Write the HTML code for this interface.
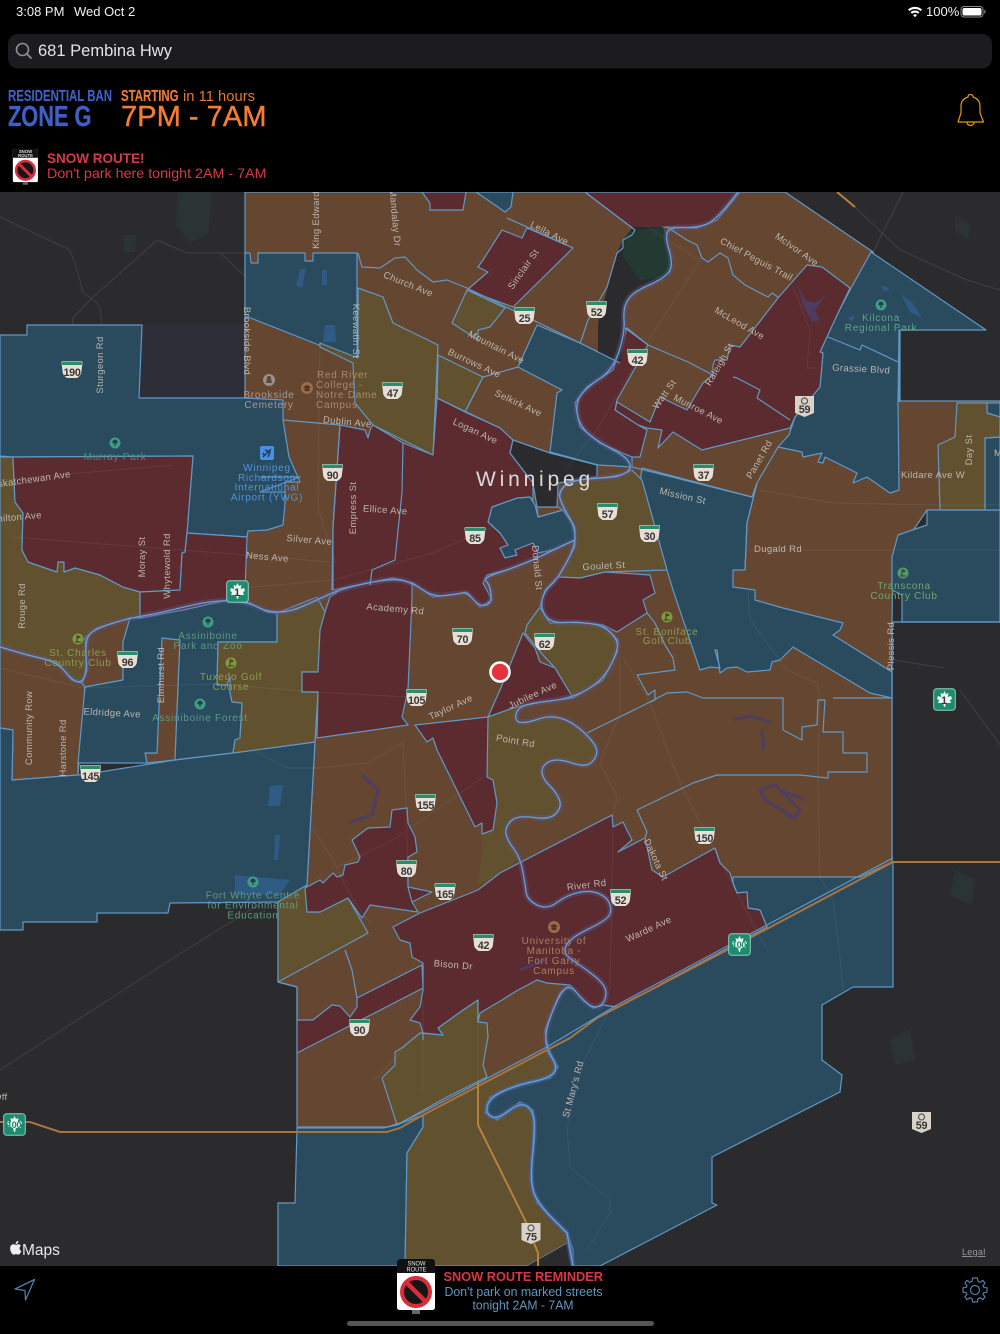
<!DOCTYPE html>
<html><head><meta charset="utf-8"><title>Snow Route Map</title>
<style>
html,body{margin:0;padding:0;background:#000;width:1000px;height:1334px;overflow:hidden}
svg{display:block;font-family:"Liberation Sans",sans-serif}
.br{fill:#654630}.ma{fill:#5b2b2f}.bl{fill:#2a4a5e}.ol{fill:#62512e}.dk{fill:#2b2b2d}
.z polygon{stroke:#6198c6;stroke-width:1.2;stroke-linejoin:round}
.ln{fill:none;stroke:#6198c6;stroke-width:1.2;stroke-linejoin:round}
.rd{fill:none;stroke:#fff;stroke-opacity:.1;stroke-width:1}
.rz{fill:none;stroke:#fff;stroke-opacity:.065;stroke-width:1}
.l text{font-size:9.5px;letter-spacing:.35px;fill:#bdb7b1;text-anchor:middle}
.p text{font-size:10px;letter-spacing:.75px;text-anchor:middle}
.sn text{font-size:10.8px;font-weight:bold;text-anchor:middle;fill:#3a3633;letter-spacing:-.3px}
</style></head><body>
<svg width="1000" height="1334" viewBox="0 0 1000 1334" xmlns="http://www.w3.org/2000/svg">
<defs>
<g id="s"><path d="M1.500 0H19.500Q21 0 21 1.500L20 10Q20 13 18 15L15.500 17H5.500L3 15Q1 13 1 10L0 1.500Q0 0 1.500 0Z" fill="#e6dfd7"/><path d="M1.500 .5H19.500Q20.500 .5 20.500 1.500L20.300 4H.7L.5 1.500Q.5 .5 1.500 .5Z" fill="#2b8c6b"/></g>
<g id="h"><path d="M1 0H20V17L10.500 21L1 17Z" fill="#d8d2ca"/><circle cx="10.500" cy="5" r="3" fill="none" stroke="#555" stroke-width="1.200"/></g>
<g id="t"><rect x=".7" y=".7" width="21.600" height="21.600" rx="3" fill="#1e8a6e" stroke="#8ed0bc" stroke-width="1"/><path d="M11.500 3L13 6L15.500 5L14.700 9L18 8L19 10.500L17 12.500L18 15L13 15L12 19H11L10 15L5 15L6 12.500L4 10.500L5 8L8.300 9L7.500 5L10 6Z" fill="#eaf4f0"/></g>
<g id="tree"><circle r="5.500" fill="currentColor"/><path d="M0-3.400a2.600 2.600 0 0 1 2.300 3.800H.6V3H-.6V.4H-2.300A2.600 2.600 0 0 1 0-3.400Z" fill="#24404a"/></g>
<g id="golf"><circle r="5.500" fill="currentColor"/><path d="M-1-3.600V2.500M-1-3.600L2-2L-1-.8M-3 3H3" stroke="#3a3a20" stroke-width="1" fill="none"/></g>
<g id="uni"><circle r="6" fill="#9a6c48"/><path d="M-4-1L0-3L4-1L0 1ZM-2.500 .5V2.500Q0 4 2.500 2.500V.5" fill="#4c3526"/></g>
<g id="sign"><rect x="-1" width="38" height="51" rx="2.500" fill="#fff"/><path d="M1.500 0H34.500A2.500 2.500 0 0 1 37 2.500V14H-1V2.500A2.500 2.500 0 0 1 1.500 0Z" fill="#111"/><circle cx="18" cy="33" r="14" fill="#151515" stroke="#d92b3a" stroke-width="4"/><path d="M8.500 23.500L27.500 42.500" stroke="#d92b3a" stroke-width="4.500"/><rect x="14" y="51" width="8" height="4" fill="#666"/></g>
<path id="rv" fill="none" d="M0 647Q27 655 42 658.5T64.5 671T77 681.5T84.5 676.5T86 654T91 633T113.5 623T145 615.5T180 608T213.5 601.5T238.5 601.5T258.5 607.5T278.5 612T303.5 606T330 594T368 583T403 580.5T423 590T445 595.5T462 593T473.5 599.5T486 605T491 594T486.5 581.5T495 574T520 565T543 555T564 545L575 540M738 192Q717 220 707 224T683.5 227.5T667.5 232T669 250T670 270T650 284.5T628 299.5T624 320T619 351.5T600 378.5T581 395T577.5 415T590 435T613.5 450T629.5 463.5T624.5 473.5T593.5 478.5T564 486.5T560.5 500T569 517T575 537T566 563.5T551 585T542.5 598.5T545 615T563.5 622.5T590 623.5T610.5 632.5T617.5 646.5T610 666.5T588 689T553 700.5T525 705.5T516 715T521 722.5T538.5 719T561.5 718.5T584 732.5T596.5 749T592.5 761.5T572 763T549.5 761.5T542 771.5T549.5 785.5T559.5 800T556 813.5T533.5 817.5T511 821T506 833.5T513.5 848.5T522.5 870T526 891.5T537 905T557 902.5T578.5 892.5T598.5 893.5T609.5 903.5T609.5 915T588.5 929T566.5 945T567.5 956T579.5 965T595 976.5T605 988T605 999T598 1006.5T588 1004T576.5 992.5T565 989T552.5 1011.5T546 1040T552.5 1058.5T554 1072.5T533.5 1081.5T503.5 1091T487.5 1105T491 1116.5T508.5 1111T526.5 1106T534 1120T532.5 1155T533.5 1191.5T552 1218L567 1233L573 1266"/>
</defs>

<rect width="1000" height="1334" fill="#000"/>
<!-- map -->
<rect y="192" width="1000" height="1074" fill="#2b2b2d"/>
<g fill="#2a3432"><path d="M178 192H212L208 235L190 242L176 225Z"/><path d="M124 235H136L135 252H124Z"/><path d="M955 215L970 225L968 240L955 230Z"/><path d="M955 870L975 880L972 905L950 895Z"/><path d="M890 1040L910 1030L915 1060L895 1065Z"/></g>
<g class="rd">
<path d="M0 217L70 250Q78 270 83 293Q95 300 100 307L103 337L98 395M187 253L157 240L90 300L73 318L70 400L40 433L0 442M187 253H245M58 418L95 458M220 253L320 345M0 1070L170 960L258 905M960 690L1000 745M855 207L900 250L967 280L1000 290M903 192L873 252M894 660L944 668"/>
</g>
<g class="z">
<polygon class="br" points="245,192 785,192 873,252 900,330 899,401 1000,401 1000,510 927,510 893,560 892,622 892,862 860,877 767,927 617,1007 547,1050 423,1115 397,1125 383,1128 297,1128 297,987 278,982 278,902 307,885 315,742 322,630 290,612 267,612 250,603 245,603"/>
<polygon class="br" points="0,647 27,655 57,662 72,680 82,683 85,687 78,775 12,780 13,730 0,728"/>
<polygon class="br" points="130,618 123,642 123,680 85,687 82,683 87,670 85,638 97,628"/>
<polygon class="br" points="162,638 180,640 175,760 147,763 145,753 157,753 155,738"/>
<!-- blues -->
<polygon fill="#2e2e38" style="stroke:none" points="142,325 245,325 245,398 139,398"/>
<polygon class="bl" points="0,335 27,335 27,325 142,325 139,398 245,398 283,400 283,420 289,457 300,482 285,482 285,503 283,525 267,530 248,531 247,537 187,533 193,456 13,457 0,456"/>
<polygon class="bl" points="245,253 250,253 251,263 258,263 258,253 305,253 305,261 313,261 313,253 357,253 357,358 319,345 248,317 245,317"/>
<polygon class="bl" points="537,325 580,343 620,363 613,370 587,387 575,403 580,427 600,443 632,457 632,467 598,465 550,452 557,393 562,390 518,367"/>
<polygon class="bl" points="492,507 488,522 500,533 508,545 500,548 505,558 517,555 515,550 533,543 538,553 553,550 575,540 577,530 563,510 538,517 535,505 530,497 517,498"/>
<polygon class="br" points="537,507 558,507 563,510 538,517"/>
<polygon class="bl" points="871,252 986,330 899,330 898,402 899,490 890,493 867,477 853,483 857,473 825,457 823,463 818,462 822,453 803,457 802,452 778,447 789,435 795,417 820,387 823,353 820,352 838,313 850,290"/>
<polygon class="bl" points="642,468 752,497 757,483 747,523 745,570 733,570 733,587 755,590 755,600 783,608 843,623 840,630 833,635 892,672 892,698 870,693 793,647 780,660 772,662 770,670 747,672 737,667 727,668 720,673 717,650 715,650 720,668 710,667 700,670 673,590 667,570 640,483"/>
<polygon class="bl" points="927,510 1000,510 1000,622 902,622 902,595 892,590 892,557 898,535 927,525"/>
<polygon class="bl" points="987,403 1000,403 1000,417 987,413"/>
<polygon class="bl" points="985,438 1000,437 1000,510 985,510"/>
<polygon class="bl" points="476,192 513,192 511,207 505,212 495,205"/>
<polygon class="bl" points="130,618 183,610 227,600 250,603 267,612 277,613 277,642 218,642 217,685 230,685 230,693 232,702 242,703 240,738 235,740 233,753 175,760 180,640 162,638 157,753 145,753 147,763 78,763 85,687 123,680 123,642"/>
<polygon class="bl" points="0,728 13,730 12,780 78,775 100,772 175,760 233,753 315,742 307,885 278,902 170,903 168,913 97,913 97,922 23,922 23,930 0,930"/>
<polygon class="bl" points="893,862 893,987 853,987 822,1005 822,1060 842,1075 840,1092 712,1157 712,1203 717,1205 600,1266 573,1266 573,1250 567,1233 537,1203 530,1180 535,1130 533,1110 520,1102 497,1120 485,1113 490,1097 517,1085 550,1078 558,1067 547,1050 545,1030 560,993 570,985 583,1000 593,1008 603,1005 617,1007 767,927 760,910 748,908 747,892 737,893 733,883 733,877 860,877"/>
<polygon class="bl" points="297,1128 383,1128 397,1125 423,1115 423,1127 407,1153 405,1266 278,1266 278,1203 295,1203"/>
<!-- olives -->
<polygon class="ol" points="0,457 13,457 15,502 23,513 22,550 28,562 57,572 58,562 64,562 64,572 75,568 100,575 123,587 140,592 140,618 130,618 97,628 85,638 87,670 82,683 72,680 57,662 27,655 0,647"/>
<polygon class="ol" points="358,288 383,297 393,323 438,345 433,455 373,425 355,403 353,363 320,347 320,343 358,358"/>
<polygon class="ol" points="438,355 483,377 465,412 437,398"/>
<polygon class="ol" points="467,290 505,308 490,327 478,330 478,340 452,323"/>
<polygon class="ol" points="558,493 570,480 617,477 632,470 642,480 667,570 605,572 580,578 558,577 575,547 575,527 563,507"/>
<polygon class="ol" points="957,403 987,403 987,413 1000,417 1000,437 985,438 985,510 940,510 938,445 955,437"/>
<polygon class="ol" points="277,613 317,597 325,612 322,630 320,658 318,672 302,672 302,692 318,692 315,742 233,753 235,740 240,738 242,703 232,702 230,693 230,677 227,685 217,685 218,642 277,642"/>
<polygon class="ol" points="278,902 307,885 307,912 320,912 348,898 368,933 278,982"/>
<polygon class="ol" points="540,607 527,625 525,633 543,655 555,668 573,698 603,680 617,653 618,640 603,625 577,622 550,623"/>
<polygon class="ol" points="488,717 513,708 517,708 515,722 527,723 550,715 573,722 595,743 598,755 587,768 557,758 542,765 542,778 557,793 562,807 550,820 517,815 505,827 507,840 520,857 500,873 478,885 482,850 482,834 493,830 497,803 493,780 487,777" style="stroke:none"/>
<polygon class="ol" points="395,1065 395,1052 403,1047 420,1033 443,1035 438,1028 463,1010 478,1000 478,1022 487,1023 488,1037 483,1065 487,1077 447,1097 397,1125 382,1078"/>
<polygon class="ol" points="546,1050 558,1067 550,1078 517,1085 490,1097 485,1113 497,1120 520,1102 533,1110 535,1130 530,1180 537,1203 567,1233 568,1243 527,1266 405,1266 407,1153 423,1127 423,1115"/>
<polygon class="dk" points="568,1243 573,1266 527,1266" style="stroke:none"/>
<!-- maroons -->
<polygon class="ma" points="13,457 193,456 187,533 185,552 182,553 180,590 140,592 123,587 100,575 75,568 64,572 64,562 58,562 57,572 28,562 22,550 23,513 15,502"/>
<polygon class="ma" points="187,533 247,537 245,590 245,603 227,600 183,610 140,618 140,592 180,590 182,553 185,552"/>
<polygon class="ma" points="340,425 365,430 368,438 370,430 373,425 403,443 433,455 437,398 465,412 500,428 513,440 510,453 533,483 533,500 530,497 517,498 492,507 488,522 500,533 508,545 500,548 505,558 517,555 515,550 533,543 538,553 553,550 533,560 507,570 487,575 483,583 492,600 480,607 467,592 457,594 433,597 413,583 393,578 343,588 333,590 333,527"/>
<polygon class="ma" points="330,597 343,588 393,578 412,583 412,597 408,690 402,717 408,725 317,738 318,692 302,692 302,672 318,672 320,630 325,612"/>
<polygon class="ma" points="502,230 522,238 527,228 573,248 513,307 467,290 488,272 478,267 483,260"/>
<polygon class="ma" points="422,192 466,192 463,210 430,210 430,203"/>
<polygon class="ma" points="585,192 740,192 717,220 697,228 667,227 635,230"/>
<polygon class="ma" points="807,265 822,267 850,288 838,313 820,352 823,353 820,387 795,417 790,428 702,450 673,432 658,448 662,430 647,428 638,425 615,410 617,402 650,422 660,397 687,410 697,393 703,383 713,375 713,365 715,360 727,360 730,345 740,347 778,298"/>
<polygon class="ma" points="627,328 648,345 617,400 615,410 638,425 647,430 640,457 632,457 600,443 580,427 575,403 587,387 613,370"/>
<polygon class="ma" points="558,577 580,578 605,572 650,575 655,593 643,600 647,613 617,632 603,625 577,622 550,623 540,607 545,590"/>
<polygon class="ma" points="523,633 535,648 540,662 555,668 573,698 533,703 513,708 488,717 500,690"/>
<polygon class="ma" points="415,725 488,717 487,777 493,780 497,803 493,830 482,834 482,823 475,827 437,750 433,738 427,742"/>
<polygon class="ma" points="352,840 368,828 390,827 392,810 407,808 408,823 415,837 417,852 408,857 408,887 432,892 412,902 418,912 370,905 362,918 348,898 320,912 307,912 305,888 320,880 323,883 333,873 337,877 343,875 345,865 358,862 360,857"/>
<polygon class="ma" points="393,927 420,913 478,890 500,873 612,815 613,827 623,822 632,840 618,852 645,838 652,870 663,877 715,848 720,863 730,873 733,883 737,893 747,892 748,908 760,910 767,927 617,1007 603,1005 593,1008 583,1000 570,985 547,983 537,980 518,990 502,1000 480,1013 478,1022 478,1000 463,1010 438,1028 443,1035 423,1033 420,1023 410,1020 420,1007 423,990 423,963 412,957 410,943 400,940"/>
<polygon class="ma" points="297,1020 313,1020 332,1005 340,1006 350,1017 357,1007 357,998 422,965 423,988 297,1053"/>
<!-- dark -->
<polygon class="dk" points="633,227 663,227 673,263 667,277 633,292 623,307 625,333 620,363 598,353 598,323 617,253 623,240" style="stroke:none"/>
<polygon fill="#233a32" points="628,232 663,227 673,263 667,277 640,280 622,255" style="stroke:none"/>
<polygon class="dk" points="513,440 550,453 597,465 597,477 558,483 557,507 537,507 533,483 510,453"/>
</g>
<!-- faint roads over zones -->
<g class="rz">
<path d="M748 590L750 620L787 670L817 683L820 697L818 773L820 877L833 900L840 957L843 990"/>
<path d="M623 657L650 703L680 783L700 823L718 857L767 950M613 817L617 797L600 763L620 713L620 657M610 990L613 830"/>
<path d="M252 750L287 768H317L367 763L403 743L407 830V887M310 823L333 860L353 900L370 923M337 867L393 840L483 777"/>
<path d="M0 668L83 688L217 684L317 692L408 697M320 343L318 507L335 563M243 588L333 580L433 553L493 527M13 537L90 543L247 555L330 562M0 480L173 465"/>
<path d="M647 227L700 260L647 343L597 430L567 467M760 490L833 503L940 505H1000M747 550H1000M793 287L810 330L807 368H820"/>
<path d="M608 1013L583 1063L567 1127L570 1167L610 1200V1213L587 1250M478 1000V1085M423 1000V1090M375 1080L405 1047"/>
</g>
<!-- water blobs -->
<g fill="#4d3d68" opacity=".9">
<path d="M797 283L805 300L815 303L826 295L815 310L820 320L812 322L803 305Z"/>
<path d="M733 720L750 716L770 722M762 730L764 750" fill="none" stroke="#4d3d68" stroke-width="3"/>
<path d="M760 790L775 785L800 810L795 818L765 800ZM780 790L805 800M795 818L785 815" fill="none" stroke="#4d3d68" stroke-width="3"/>
<path d="M362 775L378 790L372 815L350 822" fill="none" stroke="#4d3d68" stroke-width="3"/>
<path d="M635 995L660 985M520 970L545 960" fill="none" stroke="#4d3d68" stroke-width="3"/>
</g>
<g fill="#2f5a84">
<path d="M270 786L283 785L280 806L268 806Z"/><path d="M275 835L280 835L278 860L274 860Z"/><path d="M235 875L290 880L280 895L235 895Z"/>
<path d="M325 325L335 325L336 342L323 342Z"/><path d="M300 270L306 268L302 288L296 285Z"/><path d="M322 270H327V285H322Z"/>
<path d="M901 294L912 302L922 318L910 312ZM880 285L890 288L885 292ZM848 318L855 315L852 322Z"/>
</g>
<!-- rivers -->
<g fill="none" stroke-linejoin="round" stroke-linecap="round">
<use href="#rv" stroke="#5c5590" stroke-opacity=".42" stroke-width="6"/>
<path d="M546 1040Q547 1050 552.5 1058.5T554 1072.5T533.5 1081.5T503.5 1091T487.5 1105T491 1116.5T508.5 1111T526.5 1106T534 1120T532.5 1155T533.5 1191.5T552 1218L567 1233L573 1266" stroke="#3c6a9f" stroke-width="3.200"/>
<use href="#rv" stroke="#6aa0cf" stroke-width="1.300"/>
</g>
<!-- extra zone lines -->
<g class="ln">
<path d="M358 253L362 267L380 268L395 258L405 257L417 270L433 282L447 280L467 288L580 343L620 363"/>
<path d="M585 192L635 230L632 235L623 240L623 248L617 253L607 287L588 320L582 338L580 343"/>
<path d="M667 227L687 240L697 245L702 258L708 262L720 253L728 258L733 275L745 285L768 297L772 293L778 297"/>
<path d="M625 328L648 345L688 362L713 375M733 377L737 378L760 390L757 398L790 420"/>
<path d="M500 428L437 398M483 377L465 412M438 355L437 398M518 367L483 377M507 218L573 248"/>
<path d="M828 337L860 350L862 345L898 362M778 447L757 483L747 523L745 570M632 467L752 497"/>
<path d="M245 317V398M283 420L340 425M260 477H300L260 492H285M333 527L340 425M333 527L332 590M403 443L402 492L395 560L372 570L370 585"/>
<path d="M637 675L648 695L655 690L655 700L648 703L587 733M648 703L667 693L687 692L703 698H783V730L802 740V727L817 725L818 700H825L823 732H843V753H867V772H828V778L800 775L717 775L693 783L637 810L647 832L645 838"/>
<path d="M647 613L655 623L665 645L673 658L675 670L637 675M833 698H892M900 330V402M892 622H1000M892 622V862"/>
<path d="M345 950L352 970L357 998M297 1020V987L278 982"/>
<path d="M423 1033V1040M412 902L408 887"/>
<path d="M78 763V775"/>
</g>
<!-- perimeter orange -->
<g fill="none" stroke="#a9753e" stroke-width="2">
<path d="M0 1122H30L60 1132H387L400 1128L423 1115L547 1050L570 1038L597 1018L727 950L893 862H1000"/>
<path d="M478 1083V1125L525 1220L538 1253V1266M837 192L855 207" stroke="#b5823c"/>
</g>
<g class="ln"><path d="M297 1127H387L400 1123L423 1112L547 1047L617 1005L733 943L893 858"/></g>

<!-- road labels -->
<g class="l">
<text transform="translate(319 220) rotate(-90)">King Edward</text>
<text transform="translate(392 218) rotate(85)">Mandalay Dr</text>
<text transform="translate(407 287) rotate(22)">Church Ave</text>
<text transform="translate(526 271) rotate(-55)">Sinclair St</text>
<text transform="translate(548 236) rotate(27)">Leila Ave</text>
<text transform="translate(795 252) rotate(35)">McIvor Ave</text>
<text transform="translate(755 262) rotate(28)">Chief Peguis Trail</text>
<text transform="translate(738 326) rotate(30)">McLeod Ave</text>
<text transform="translate(495 350) rotate(27)">Mountain Ave</text>
<text transform="translate(473 366) rotate(25)">Burrows Ave</text>
<text transform="translate(517 406) rotate(25)">Selkirk Ave</text>
<text transform="translate(474 434) rotate(25)">Logan Ave</text>
<text transform="translate(722 366) rotate(-60)">Raleigh St</text>
<text transform="translate(667 396) rotate(-55)">Watt St</text>
<text transform="translate(697 412) rotate(27)">Munroe Ave</text>
<text transform="translate(762 461) rotate(-60)">Panet Rd</text>
<text transform="translate(682 499) rotate(13)">Mission St</text>
<text transform="translate(347 425) rotate(6)">Dublin Ave</text>
<text transform="translate(385 513) rotate(4)">Ellice Ave</text>
<text transform="translate(356 508) rotate(-90)">Empress St</text>
<text transform="translate(353 331) rotate(90)">Keewatin St</text>
<text transform="translate(244 341) rotate(90)">Brookside Blvd</text>
<text transform="translate(103 365) rotate(-90)">Sturgeon Rd</text>
<text transform="translate(71 477) rotate(-8)" style="text-anchor:end">Saskatchewan Ave</text>
<text transform="translate(42 518) rotate(-5)" style="text-anchor:end">Hamilton Ave</text>
<text transform="translate(145 557) rotate(-90)">Moray St</text>
<text transform="translate(170 566) rotate(-90)">Whytewold Rd</text>
<text transform="translate(309 543) rotate(5)">Silver Ave</text>
<text transform="translate(267 560) rotate(5)">Ness Ave</text>
<text transform="translate(395 612) rotate(5)">Academy Rd</text>
<text transform="translate(604 569) rotate(-3)">Goulet St</text>
<text transform="translate(534 568) rotate(85)">Donald St</text>
<text transform="translate(778 552)">Dugald Rd</text>
<text transform="translate(861 372) rotate(3)">Grassie Blvd</text>
<text transform="translate(933 478)">Kildare Ave W</text>
<text transform="translate(972 450) rotate(-90)">Day St</text>
<text transform="translate(994 456)" style="text-anchor:start">M</text>
<text transform="translate(25 606) rotate(-90)">Rouge Rd</text>
<text transform="translate(32 728) rotate(-90)">Community Row</text>
<text transform="translate(66 748) rotate(-90)">Harstone Rd</text>
<text transform="translate(112 716) rotate(3)">Eldridge Ave</text>
<text transform="translate(164 675) rotate(-90)">Elmhurst Rd</text>
<text transform="translate(452 710) rotate(-25)">Taylor Ave</text>
<text transform="translate(534 698) rotate(-25)">Jubilee Ave</text>
<text transform="translate(515 744) rotate(10)">Point Rd</text>
<text transform="translate(894 646) rotate(-90)">Plessis Rd</text>
<text transform="translate(653 861) rotate(65)">Dakota St</text>
<text transform="translate(587 888) rotate(-7)">River Rd</text>
<text transform="translate(650 932) rotate(-25)">Warde Ave</text>
<text transform="translate(453 968) rotate(5)">Bison Dr</text>
<text transform="translate(576 1090) rotate(-75)">St Mary's Rd</text>
<text transform="translate(-6 1100)" style="text-anchor:start">Off</text>
</g>

<!-- POI -->
<g class="p">
<use href="#tree" x="115" y="443" color="#3f9d83"/>
<text x="115" y="460" fill="#4b8c7c">Murray Park</text>
<rect x="260" y="446" width="14" height="14" rx="2" fill="#4a90e2"/><path d="M263 457L271 449M265 450L270 452L268 457M264 455L263 453" stroke="#1d3b5c" stroke-width="1.500" fill="none"/>
<g fill="#4f95dc"><text x="267" y="471">Winnipeg</text><text x="267" y="481">Richardson</text><text x="267" y="490.500">International</text><text x="267" y="500.500">Airport (YWG)</text></g>
<circle cx="269" cy="380" r="6" fill="#9a9088"/><path d="M266 383H272L271 378A2 2 0 0 0 267 378Z" fill="#5a4a3e"/>
<g fill="#a59b93"><text x="269" y="398">Brookside</text><text x="269" y="408">Cemetery</text></g>
<use href="#uni" x="307" y="388"/>
<g fill="#a88a6c"><text x="317" y="378" style="text-anchor:start">Red River</text><text x="316" y="388" style="text-anchor:start">College -</text><text x="316" y="398" style="text-anchor:start">Notre Dame</text><text x="316" y="408" style="text-anchor:start">Campus</text></g>
<use href="#tree" x="881" y="305" color="#3f9d83"/>
<g fill="#5aa58b"><text x="881" y="321">Kilcona</text><text x="881" y="331">Regional Park</text></g>
<use href="#golf" x="903" y="573" color="#4e9c6e"/>
<g fill="#6da86d"><text x="904" y="589">Transcona</text><text x="904" y="599">Country Club</text></g>
<use href="#golf" x="667" y="617" color="#7f9a3e"/>
<g fill="#8c9c50"><text x="667" y="635">St. Boniface</text><text x="667" y="644">Golf Club</text></g>
<use href="#golf" x="78" y="639" color="#7f9a3e"/>
<g fill="#8c9c50"><text x="78" y="656">St. Charles</text><text x="78" y="666">Country Club</text></g>
<use href="#tree" x="208" y="622" color="#3f9d83"/>
<g fill="#5b9a80"><text x="208" y="639">Assiniboine</text><text x="208" y="649">Park and Zoo</text></g>
<use href="#golf" x="231" y="663" color="#7f9a3e"/>
<g fill="#8c9c50"><text x="231" y="680">Tuxedo Golf</text><text x="231" y="690">Course</text></g>
<use href="#tree" x="200" y="704" color="#3f9d83"/>
<text x="200" y="721" fill="#5b9a80">Assiniboine Forest</text>
<use href="#tree" x="253" y="882" color="#3f9d83"/>
<g fill="#5b9a80"><text x="253" y="898.500">Fort Whyte Centre</text><text x="253" y="908.500">for Environmental</text><text x="253" y="918.500">Education</text></g>
<use href="#uni" x="554" y="927"/>
<g fill="#a8805f"><text x="554" y="944">University of</text><text x="554" y="954">Manitoba -</text><text x="554" y="964">Fort Garry</text><text x="554" y="974">Campus</text></g>
</g>
<text x="535" y="486" font-size="21" fill="#dcdad8" text-anchor="middle" letter-spacing="3.800">Winnipeg</text>

<!-- shields -->
<g class="sn">
<use href="#s" x="61.500" y="361"/><text x="72" y="376">190</text>
<use href="#s" x="382" y="382"/><text x="392.500" y="397">47</text>
<use href="#s" x="322" y="464"/><text x="332.500" y="479">90</text>
<use href="#s" x="464.500" y="527"/><text x="475" y="542">85</text>
<use href="#s" x="514" y="307"/><text x="524.500" y="322">25</text>
<use href="#s" x="586" y="301"/><text x="596.500" y="316">52</text>
<use href="#s" x="627" y="349"/><text x="637.500" y="364">42</text>
<use href="#s" x="693" y="464"/><text x="703.500" y="479">37</text>
<use href="#s" x="597" y="503"/><text x="607.500" y="518">57</text>
<use href="#s" x="639" y="525"/><text x="649.500" y="540">30</text>
<use href="#s" x="452" y="628"/><text x="462.500" y="643">70</text>
<use href="#s" x="534" y="633"/><text x="544.500" y="648">62</text>
<use href="#s" x="406" y="689"/><text x="416.500" y="704">105</text>
<use href="#s" x="117" y="651"/><text x="127.500" y="666">96</text>
<use href="#s" x="80" y="765"/><text x="90.500" y="780">145</text>
<use href="#s" x="415" y="794"/><text x="425.500" y="809">155</text>
<use href="#s" x="396" y="860"/><text x="406.500" y="875">80</text>
<use href="#s" x="434.500" y="883"/><text x="445" y="898">165</text>
<use href="#s" x="473" y="934"/><text x="483.500" y="949">42</text>
<use href="#s" x="349" y="1019"/><text x="359.500" y="1034">90</text>
<use href="#s" x="694" y="827"/><text x="704.500" y="842">150</text>
<use href="#s" x="610" y="889"/><text x="620.500" y="904">52</text>
<use href="#h" x="794" y="396"/><text x="804.500" y="413">59</text>
<use href="#h" x="911" y="1112"/><text x="921.500" y="1129">59</text>
<use href="#h" x="520.500" y="1223"/><text x="531" y="1240.500">75</text>
<use href="#t" x="226" y="580"/><text x="237" y="596" fill="#1e8a6e">1</text>
<use href="#t" x="933" y="688"/><text x="944" y="704" fill="#1e8a6e">1</text>
<use href="#t" x="728" y="933"/><text x="739" y="948" style="font-size:9px;fill:#1e8a6e">100</text>
<use href="#t" x="3" y="1113"/><text x="14" y="1128" style="font-size:9px;fill:#1e8a6e">100</text>
</g>

<!-- pin -->
<circle cx="500" cy="672" r="9.500" fill="#e4333f" stroke="#fff" stroke-width="2.600"/>

<!-- Maps logo -->
<path d="M17 1244.500c.6-.7 1-1.500.9-2.300-.8 0-1.700.5-2.200 1.100-.5.600-.9 1.400-.8 2.200.8.100 1.600-.4 2.100-1ZM17.900 1245.700c-1.200-.1-2.200.7-2.800.7s-1.500-.7-2.400-.6c-1.200 0-2.400.7-3 1.800-1.300 2.200-.3 5.500.9 7.300.6.900 1.300 1.900 2.300 1.800.9 0 1.300-.6 2.400-.6s1.400.6 2.400.6 1.600-.9 2.200-1.800c.7-1 1-2 1-2-.1 0-1.900-.8-1.900-2.900 0-1.800 1.500-2.600 1.500-2.700-.8-1.200-2.100-1.500-2.600-1.600Z" fill="#eee" transform="translate(1 0) scale(.95) translate(.5 64)"/>
<text x="22" y="1255" font-size="15.500" fill="#e8e8e8">Maps</text>
<text x="962" y="1255" font-size="9" fill="#9a9a9a" text-decoration="underline" letter-spacing=".3">Legal</text>

<!-- header -->
<rect width="1000" height="192" fill="#000"/>
<text x="16" y="16" font-size="13" fill="#f2f2f2">3:08 PM</text>
<text x="74" y="16" font-size="13" fill="#f2f2f2">Wed Oct 2</text>
<path d="M908 9.500a10.500 10.500 0 0 1 14 0l-1.500 1.600a8.300 8.300 0 0 0-11 0Z M910.500 12.200a6.800 6.800 0 0 1 9 0l-1.500 1.600a4.600 4.600 0 0 0-6 0Z M913 15a3.300 3.300 0 0 1 4 0l-2 2.200Z" fill="#fff"/>
<text x="926" y="16" font-size="13" fill="#f2f2f2">100%</text>
<rect x="961" y="6.500" width="22" height="10.500" rx="3" fill="none" stroke="#888" stroke-width="1"/>
<rect x="962.500" y="8" width="19" height="7.500" rx="1.800" fill="#fff"/>
<rect x="984.200" y="10" width="1.200" height="3.500" rx=".6" fill="#888"/>

<rect x="8" y="34" width="984" height="34.500" rx="10" fill="#1c1c1e"/>
<circle cx="22.500" cy="49.500" r="6" fill="none" stroke="#8e8e93" stroke-width="1.600"/>
<path d="M27 54L31 58" stroke="#8e8e93" stroke-width="1.800" stroke-linecap="round"/>
<text x="38" y="56" font-size="17" fill="#e4e4e4" textLength="134" lengthAdjust="spacingAndGlyphs">681 Pembina Hwy</text>

<text x="8" y="101" font-size="15.300" font-weight="bold" fill="#3f5fc6" stroke="#3f5fc6" stroke-width=".15" textLength="104" lengthAdjust="spacingAndGlyphs">RESIDENTIAL BAN</text>
<text x="8" y="126" font-size="29" font-weight="bold" fill="#3f5fc6" stroke="#3f5fc6" stroke-width=".35" textLength="83.500" lengthAdjust="spacingAndGlyphs">ZONE G</text>
<text x="121" y="101" font-size="15.300" font-weight="bold" fill="#f07a30" stroke="#f07a30" stroke-width=".15" textLength="57.500" lengthAdjust="spacingAndGlyphs">STARTING</text>
<text x="183" y="101" font-size="14.500" fill="#e8762e" textLength="72" lengthAdjust="spacingAndGlyphs">in 11 hours</text>
<text x="121" y="126" font-size="29" fill="#f47c30" textLength="145.500" lengthAdjust="spacingAndGlyphs" stroke="#f47c30" stroke-width=".4">7PM - 7AM</text>

<path d="M958 122L961 113V106C961 100 965 98 968 97C968 95 969.500 94.500 970.500 94.500C971.500 94.500 973 95 973 97C976 98 980 100 980 106V113L983.500 122ZM967 122.500a3.500 3 0 0 0 7 0" fill="none" stroke="#e39a00" stroke-width="1.200" stroke-linejoin="round"/>

<g transform="translate(13.500 148.500) scale(.66)"><use href="#sign"/></g>
<text x="25.500" y="153.200" font-size="4.300" font-weight="bold" fill="#ddd" text-anchor="middle">SNOW</text>
<text x="25.500" y="157" font-size="4.300" font-weight="bold" fill="#ddd" text-anchor="middle">ROUTE</text>
<text x="47" y="163" font-size="14" font-weight="bold" fill="#d83a45" textLength="97.500" lengthAdjust="spacingAndGlyphs">SNOW ROUTE!</text>
<text x="47" y="178" font-size="14" fill="#d83a45" textLength="219.500" lengthAdjust="spacingAndGlyphs">Don't park here tonight 2AM - 7AM</text>

<!-- bottom bar -->
<rect y="1266" width="1000" height="68" fill="#000"/>
<g transform="translate(398 1259)"><use href="#sign"/></g>
<text x="416.500" y="1265.700" font-size="6.800" fill="#eee" text-anchor="middle" textLength="18" lengthAdjust="spacingAndGlyphs">SNOW</text>
<text x="416.500" y="1271.700" font-size="6.800" fill="#eee" text-anchor="middle" textLength="20" lengthAdjust="spacingAndGlyphs">ROUTE</text>
<text x="443.500" y="1281" font-size="13" font-weight="bold" fill="#d93742" textLength="159.500" lengthAdjust="spacingAndGlyphs">SNOW ROUTE REMINDER</text>
<text x="444.500" y="1296" font-size="12.500" fill="#6295bd" textLength="158" lengthAdjust="spacingAndGlyphs">Don't park on marked streets</text>
<text x="472.500" y="1309.500" font-size="12.500" fill="#6295bd" textLength="101" lengthAdjust="spacingAndGlyphs">tonight 2AM - 7AM</text>
<rect x="347" y="1321" width="307" height="5" rx="2.500" fill="#555"/>
<path d="M34.500 1279.500L15 1289L25 1290.500L25.500 1300Z" fill="none" stroke="#4f7fa8" stroke-width="1.300" stroke-linejoin="round"/>
<g transform="translate(975 1290)" fill="none" stroke="#4f7fa8" stroke-width="1.200">
<circle r="4.500"/>
<path d="M-2.400-12H2.400L3-8.700L5.200-7.700L8-9.600L10-6.800L8-4.400L8.700-2.700L12-2.200V2.200L8.700 2.700L8 4.400L10 6.800L8 9.600L5.200 7.700L3 8.700L2.400 12H-2.400L-3 8.700L-5.200 7.700L-8 9.600L-10 6.800L-8 4.400L-8.700 2.700L-12 2.200V-2.200L-8.700-2.700L-8-4.400L-10-6.800L-8-9.600L-5.200-7.700L-3-8.700Z" stroke-linejoin="round"/>
</g>
</svg>
</body></html>
